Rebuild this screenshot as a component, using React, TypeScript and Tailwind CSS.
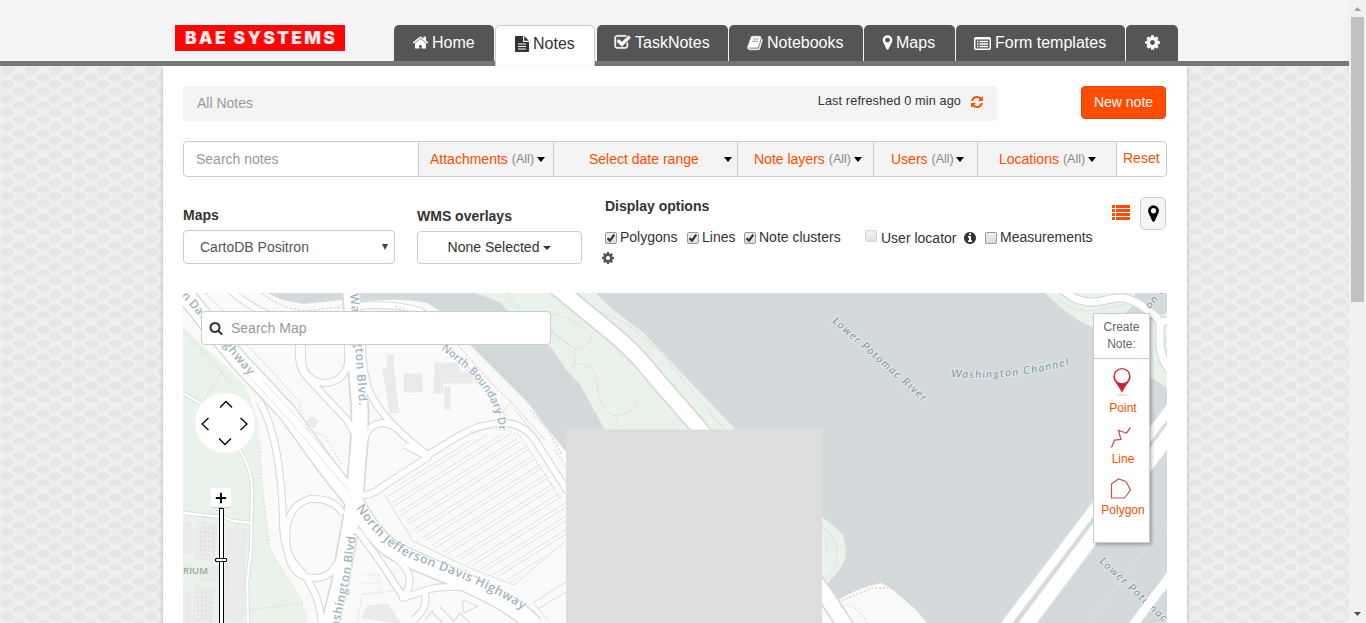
import React from "react";

const SANS = "font-['Liberation_Sans',Arial,sans-serif]";

const ICONS = {
  home: "M1472 992v480q0 26-19 45t-45 19h-384v-384h-256v384h-384q-26 0-45-19t-19-45v-480q0-1 .5-3t.5-3l575-474 575 474q1 2 1 6zm223-69l-62 74q-8 9-21 11h-3q-13 0-21-7l-692-577-692 577q-12 8-24 7-13-2-21-11l-62-74q-8-10-7-23.5t11-21.5l719-599q32-26 76-26t76 26l244 204v-195q0-14 9-23t23-9h192q14 0 23 9t9 23v408l219 182q10 8 11 21.5t-7 23.5z",
  cog: "M1152 896q0-106-75-181t-181-75-181 75-75 181 75 181 181 75 181-75 75-181zm512-109v222q0 12-8 23t-20 13l-185 28q-19 54-39 91 35 50 107 138 10 12 10 25t-9 23q-27 37-99 108t-94 71q-12 0-26-9l-138-108q-44 23-91 38-16 136-29 186-7 28-36 28h-222q-14 0-24.5-8.5t-11.5-21.5l-28-184q-49-16-90-37l-141 107q-10 9-25 9-14 0-25-11-126-114-165-168-7-10-7-23 0-12 8-23 15-21 51-66.5t54-70.5q-27-50-41-99l-183-27q-13-2-21-12.5t-8-23.5v-222q0-12 8-23t19-13l186-28q14-46 39-92-40-57-107-138-10-12-10-24 0-10 9-23 26-36 98.5-107.5t94.5-71.5q13 0 26 10l138 107q44-23 91-38 16-136 29-186 7-28 36-28h222q14 0 24.5 8.5t11.5 21.5l28 184q49 16 90 37l142-107q9-9 24-9 13 0 25 10 129 119 165 170 7 8 7 22 0 12-8 23-15 21-51 66.5t-54 70.5q26 50 41 98l183 28q13 2 21 12.5t8 23.5z",
  marker: "M1152 640q0-106-75-181t-181-75-181 75-75 181 75 181 181 75 181-75 75-181zm256 0q0 109-33 179l-364 774q-16 33-47.5 52t-67.5 19-67.5-19-46.5-52l-365-774q-33-70-33-179 0-212 150-362t362-150 362 150 150 362z",
  refresh: "M1639 1056q0 5-1 7-64 268-268 434.5t-478 166.5q-146 0-282.5-55t-243.5-157l-129 129q-19 19-45 19t-45-19-19-45v-448q0-26 19-45t45-19h448q26 0 45 19t19 45-19 45l-137 137q71 66 161 102t187 36q134 0 250-65t186-179q11-17 53-117 8-23 30-23h192q13 0 22.5 9.5t9.5 22.5zm25-800v448q0 26-19 45t-45 19h-448q-26 0-45-19t-19-45 19-45l138-138q-148-137-349-137-134 0-250 65t-186 179q-11 17-53 117-8 23-30 23h-199q-13 0-22.5-9.5t-9.5-22.5v-7q65-268 270-434.5t480-166.5q146 0 284 55.5t245 156.5l130-129q19-19 45-19t45 19 19 45z",
  file: "M1596 476q14 14 28 36h-472v-472q22 14 36 28zm-476 164h544v1056q0 40-28 68t-68 28h-1344q-40 0-68-28t-28-68v-1600q0-40 28-68t68-28h800v544q0 40 28 68t68 28zm160 736v-64q0-14-9-23t-23-9h-704q-14 0-23 9t-9 23v64q0 14 9 23t23 9h704q14 0 23-9t9-23zm0-256v-64q0-14-9-23t-23-9h-704q-14 0-23 9t-9 23v64q0 14 9 23t23 9h704q14 0 23-9t9-23zm0-256v-64q0-14-9-23t-23-9h-704q-14 0-23 9t-9 23v64q0 14 9 23t23 9h704q14 0 23-9t9-23z",
  check: "M1472 930v318q0 119-84.5 203.5t-203.5 84.5h-832q-119 0-203.5-84.5t-84.5-203.5v-832q0-119 84.5-203.5t203.5-84.5h832q63 0 117 25 15 7 18 23 3 17-9 29l-49 49q-10 10-23 10-3 0-9-2-23-6-45-6h-832q-66 0-113 47t-47 113v832q0 66 47 113t113 47h832q66 0 113-47t47-113v-254q0-13 9-22l64-64q10-10 23-10 6 0 12 3 20 8 20 29zm231-489l-814 814q-24 24-57 24t-57-24l-430-430q-24-24-24-57t24-57l110-110q24-24 57-24t57 24l263 263 647-647q24-24 57-24t57 24l110 110q24 24 24 57t-24 57z",
  book: "M1703 478q40 57 18 129l-275 906q-19 64-76.5 107.5t-122.5 43.5h-923q-77 0-148.5-53.5t-99.5-131.5q-24-67-2-127 0-4 3-27t4-37q1-8-3-21.5t-3-19.5q2-11 8-21t16.5-23.5 16.5-23.5q23-38 45-91.5t30-91.5q3-10 .5-30t-.5-28q3-11 17-28t17-23q21-36 42-92t25-90q1-9-2.5-32t.5-28q4-13 22-30.5t22-22.5q19-26 42.5-84.5t27.5-96.5q1-8-3-25.5t-2-26.5q2-8 9-18t18-23 17-21q8-12 16.5-30.5t15-35 16-36 19.5-32 26.5-23.5 36-11.5 47.5 5.500l-1 3q38-9 51-9h761q74 0 114 56t18 130l-274 906q-36 119-71.5 153.5t-128.5 34.500h-869q-27 0-38 15-11 16-1 43 24 70 144 70h923q29 0 56-15.500t35-41.500l300-987q7-22 5-57 38 15 59 43zm-1064 2q-4 13 2 22.500t20 9.500h608q13 0 25.500-9.500t16.500-22.500l21-64q4-13-2-22.500t-20-9.500h-608q-13 0-25.500 9.500t-16.500 22.500zm-83 256q-4 13 2 22.500t20 9.500h608q13 0 25.500-9.500t16.500-22.500l21-64q4-13-2-22.500t-20-9.500h-608q-13 0-25.500 9.500t-16.500 22.500z",
  info: "M1152 1376v-160q0-14-9-23t-23-9h-96v-512q0-14-9-23t-23-9h-320q-14 0-23 9t-9 23v160q0 14 9 23t23 9h96v320h-96q-14 0-23 9t-9 23v160q0 14 9 23t23 9h448q14 0 23-9t9-23zm-128-896v-160q0-14-9-23t-23-9h-192q-14 0-23 9t-9 23v160q0 14 9 23t23 9h192q14 0 23-9t9-23zm640 416q0 209-103 385.5t-279.5 279.5-385.5 103-385.5-103-279.5-279.5-103-385.5 103-385.5 279.5-279.5 385.5-103 385.5 103 279.5 279.5 103 385.5z",
  search: "M1216 832q0-185-131.5-316.5t-316.5-131.5-316.5 131.5-131.5 316.5 131.5 316.5 316.5 131.5 316.5-131.5 131.5-316.5zm512 832q0 52-38 90t-90 38q-54 0-90-38l-343-342q-179 124-399 124-143 0-273.5-55.5t-225-150-150-225-55.5-273.5 55.5-273.5 150-225 225-150 273.5-55.5 273.5 55.5 225 150 150 225 55.5 273.5q0 220-124 399l343 343q37 37 37 90z",
};

function Icon({ name, heavy = false, className = "" }: { name: keyof typeof ICONS; heavy?: boolean; className?: string }) {
  return (
    <svg viewBox="0 0 1792 1792" className={`shrink-0 ${className}`} fill="currentColor" stroke={heavy ? "currentColor" : "none"} strokeWidth="50">
      <path d={ICONS[name]} />
    </svg>
  );
}

function ListAlt() {
  return (
    <svg viewBox="0 0 17 14" className="h-[14px] w-[17px] shrink-0" fill="none">
      <rect x="0.75" y="1.75" width="15.5" height="11.5" rx="1.2" stroke="#fff" strokeWidth="1.5" />
      <path d="M1 2.500h15" stroke="#fff" strokeWidth="2" />
      <path d="M3 5.500h1.500M5.500 5.500H14M3 8h1.500M5.500 8H14M3 10.500h1.500M5.500 10.500H14" stroke="#fff" strokeWidth="1.300" />
    </svg>
  );
}

function Texture() {
  const dots: React.ReactElement[] = [];
  const lens = (cx: number, cy: number, seed: number) => {
    for (let y = -4; y <= 4; y++)
      for (let x = -7; x <= 7; x++) {
        const r = (x * x) / 46 + (y * y) / 17;
        if (r > 1) continue;
        const n = (Math.abs(x * 7 + y * 13 + seed * 5) * 31) % 5;
        const odd = Math.abs(x + y) % 2 === 1;
        const fill = odd ? (n < 2 ? "#e9e9e9" : "#eeeeee") : ["#dcdcdc", "#e0e0e0", "#e3e3e3", "#dfdfdf", "#e5e5e5"][n];
        dots.push(<rect key={`${cx},${cy},${x},${y}`} x={cx + x} y={cy + y} width="1" height="1" fill={fill} />);
      }
  };
  [0, 1, 2].forEach((c) =>
    [0, 1, 2].forEach((r) => {
      lens(7 + c * 24, 4 + r * 14, c + r * 2);
      lens(19 + c * 24, 11 + r * 14, c * 3 + r + 1);
    }),
  );
  return (
    <svg className="absolute inset-0 h-full w-full" shapeRendering="crispEdges">
      <defs>
        <pattern id="lens" width="72" height="42" patternUnits="userSpaceOnUse">
          <rect width="72" height="42" fill="#eeeeee" />
          {dots}
        </pattern>
      </defs>
      <rect width="100%" height="100%" fill="url(#lens)" />
    </svg>
  );
}

function Tab({ w, pl, children }: { w: string; pl: string; children: React.ReactNode }) {
  return (
    <div className={`flex h-9 items-center rounded-t-[5px] bg-[#555] pb-px text-base whitespace-nowrap text-white ${w} ${pl}`}>
      {children}
    </div>
  );
}

function Caret({ className = "" }: { className?: string }) {
  return <span className={`inline-block border-x-4 border-t-[5px] border-x-transparent border-t-black ${className}`} />;
}

function Filter({ label, all = true, className, caret }: { label: string; all?: boolean; className: string; caret: string }) {
  return (
    <div className={`flex items-center border-l border-[#ccc] bg-[#f4f4f4] text-sm whitespace-nowrap text-[#ff4c00] ${className}`}>
      {label}
      {all && <span className="ml-1 pt-px text-[12.5px] text-[#888]">(All)</span>}
      <Caret className={`mt-px ${caret}`} />
    </div>
  );
}

function Check({ on = false, faded = false, className = "" }: { on?: boolean; faded?: boolean; className?: string }) {
  return (
    <span
      className={`flex size-3 shrink-0 items-center justify-center rounded-[2px] border bg-linear-to-b from-[#efefef] to-[#dcdcdc] ${faded ? "border-[#ccc] opacity-80" : "border-[#999]"} ${className}`}
    >
      {on && (
        <svg viewBox="0 0 10 10" className="size-[10px]" fill="none" stroke="#333" strokeWidth="2.2">
          <path d="M1.5 5.2 4 7.6 8.3 1.6" />
        </svg>
      )}
    </span>
  );
}

const HIGHWAY = "M176 282 L207 322 L240 362 L287 412 L323 462 L353 500 C366 522 376 538 390 548 C412 562 440 570 465 582 C495 596 515 606 534 625";
const BLVD = "M351 290 L355 345 L360 410 Q360 440 358 455 L355 495 L350 527 L340 583 L329 628";
const PARKWAY = "M556 287 L612 333 Q635 352 653 375 L700 429 L824 593 L848 630";
const RAMPS = [
  "M299 340 V358 Q300 370 307 377 L347 420 L356 436",
  "M348 340 V364 Q343 383 323 383 Q304 380 302 362 V345",
  "M362 340 Q362 385 377 405 Q392 428 428 455",
  "M364 442 Q367 424 383 423 Q391 424 396 428",
  "M428 455 L457 437 Q482 422 507 423 Q524 425 535 440 L568 492",
  "M362 495 Q373 495 382 487 L428 457 L405 445",
  "M343 514 Q335 498 310 499 Q287 505 286 536 Q287 578 313 578 Q332 578 337 562",
  "M260 402 Q272 425 277 455 Q282 485 283 517 Q282 550 297 567 C310 580 321 598 322 628",
  "M357 530 L377 557 L404 598",
  "M380 548 Q403 560 409 575 Q412 586 403 598 L427 590 Q440 586 460 587",
  "M425 592 Q427 604 422 611 L414 620",
  "M230 290 Q260 316 290 320",
  "M359 306 Q395 303 420 311 L446 330",
];
const THIN_ROADS = [
  "M183 513 L223 517 L233 521 L251 523",
  "M240 450 Q252 470 252 490 L251 550 L247 583 L248 623",
  "M183 393 L205 406 L235 436 L240 452",
  "M443 345 L467 368 L490 395 Q502 410 504 420",
];
const TRAILS = [
  "M207 293 Q220 310 235 320 M247 345 L275 375 L298 400 L308 430 L325 436 L342 465",
  "M183 330 L222 372 L230 384 M222 372 L205 398",
  "M260 440 L262 483 L270 550 L303 603 L248 610",
  "M508 293 Q514 308 530 315 L570 345",
  "M550 313 Q578 320 590 333 Q594 345 575 349 Q560 340 552 331 M575 349 V364 Q590 362 596 375 Q600 420 622 415 Q640 410 634 396 M576 364 L568 370 M615 415 L618 429",
  "M578 293 Q600 315 615 318 Q640 330 662 354 Q700 400 724 429",
  "M822 526 Q840 540 837 560 Q833 575 823 580 M822 535 Q832 547 822 555",
  "M840 607 Q852 603 859 612 L868 623",
  "M1060 301 Q1080 315 1100 309 L1128 304",
  "M1160 318 L1167 313 M1165 335 L1167 352",
  "M470 432 Q500 424 520 436 L560 498",
  "M368 430 V400",
  "M187 518 V530 M204 517 V522 M237 523 V530 M186 565 L198 575",
];
const RED_TRAILS = [
  "M262 293 Q280 308 305 311 L342 307 M395 307 L430 315",
  "M458 345 Q480 370 495 387 L511 402 M530 410 L548 430 L562 455",
  "M838 602 L872 588 L888 588",
  "M555 450 L567 468",
];

function Buildings() {
  return (
    <g fill="#ebebeb" stroke="#e2e2e2" strokeWidth="0.6">
      <path d="M388 355h6l-1 11h-6zM383 369l10-2 3 20-10 1zM386 389l9-1 4 24-9 1zM404 374h18v18h-18zM435 363h22l3 9 12 2v9h-29v10h-9v-16h1zM445 387h5v22h-5zM311 416l7 5-4 7-8-5z" />
      <path d="M183 524h8v29h-8zM198 522l19 3-3 35-18-1zM228 528l18 1-4 91-17-1zM195 586l19 3-3 40-18-1zM183 592h7v31h-7zM200 568h28v12h-28z" />
      <path d="M362 618l6-12 20-2 12 19z" />
      <path d="M364 576l15-2 2 17-19 3-5 30M362 584l18-1M361 595l34-4" fill="none" />
      <path d="M462 600l16 6-14 7zM432 612l10 10M440 607l14 14 6-8 10 10M425 620l8-10" fill="none" stroke="#ddd" strokeWidth="1.2" />
      <g fill="none" stroke="#d4d4d4" strokeWidth="1.2" strokeDasharray="1.5 3">
        <path d="M201 527v28M205 527v29M209 527v29M213 528v26M198 592v31M202 591v32M206 592v31M210 593v30" />
      </g>
    </g>
  );
}

function MapCanvas() {
  const rows = Array.from({ length: 20 }, (_, i) => i);
  return (
    <svg viewBox="183 293 984 330" className="block h-[330px] w-[984px] font-['Open_Sans','Noto_Sans',sans-serif]">
      <defs>
        <clipPath id="lot">
          <path d="M386 494 L428 464 L460 444 L490 434 L512 434 L530 450 L566 502 V540 L512 582 L470 565 L413 538 Z" />
        </clipPath>
        <path id="hwyLabel" d="M356 508 C373 533 388 549 412 559 C445 573 485 583 540 621" />
        <path id="blvdLabel" d="M336 640 L351 570 L359 510" />
        <path id="blvdTop" d="M350 294 L355 345 L361 430" />
        <path id="northLabel" d="M441 349 L467 370 Q498 400 499 432" />
        <path id="ghway" d="M223 345 L262 391" />
        <path id="riverLabel" d="M832 322 L927 405" />
        <path id="channelLabel" d="M951 377 Q1012 382 1080 362" />
        <path id="river2" d="M1099 562 L1176 634" />
      </defs>
      <rect x="183" y="293" width="984" height="330" fill="#fafaf8" />
      <path d="M183 328 L227 367 L245 385 L258 420 L262 483 L270 550 L303 603 L308 623 H183Z" fill="#e9f2eb" />
      <path d="M268 293 L280 299 L303 304 L342 300 V293Z M359 293 V302 Q400 297 427 303 L443 313 L470 345 L527 402 L550 432 L567 453 H822 V597 L836 601 Q860 587 881 583 L893 590 L915 609 L927 623 H1167 V293Z" fill="#d4dadc" />
      <path d="M475 293 L500 302 L510 314 L547 343 L553 350 L565 368 L580 385 L605 430 H736 L677 368 L643 332 L613 310 L596 293Z" fill="#e9f2eb" />
      <path d="M822 517 L836 528 L843 535 L846 550 L845 560 Q838 574 830 580 L826 588 H822Z" fill="#e9f2eb" />
      <path d="M1045 293 L1060 307 Q1080 323 1093 327 L1115 322 L1128 311 L1135 303 V293Z M1143 327 L1158 315 L1167 313 V388 L1150 377Z" fill="#e9f2eb" />

      <g fill="none" stroke="#dedede">
        <g clipPath="url(#lot)" strokeWidth="0.9">
          {rows.map((i) => (
            <path key={i} d={`M${374 + i * 8.2} ${487 + i * 8.4} l190 -118 m1.8 3.4 l-190 118`} />
          ))}
        </g>
        <path d="M384 494 L413 541 L470 568 L514 585 L570 537" strokeWidth="1" />
        <path d="M533 603 L566 582 M538 609 L566 592 M533 603 L548 620" strokeWidth="1" />
        <path d="M502 413 L511 402 L545 440 M513 408 L540 440" strokeWidth="1" />
      </g>
      <Buildings />

      <g fill="none" strokeLinejoin="round">
        <g stroke="#dadada">
          {THIN_ROADS.map((d) => <path key={d} d={d} strokeWidth="4" />)}
          {RAMPS.map((d) => <path key={d} d={d} strokeWidth="8" />)}
          <path d={HIGHWAY} strokeWidth="20" />
          <path d={BLVD} strokeWidth="19" />
          <path d={PARKWAY} strokeWidth="18" />
        </g>
        <g stroke="#ffffff">
          {THIN_ROADS.map((d) => <path key={d} d={d} strokeWidth="2.4" />)}
          {RAMPS.map((d) => <path key={d} d={d} strokeWidth="5.8" />)}
          <path d={HIGHWAY} strokeWidth="17" />
          <path d={BLVD} strokeWidth="15.5" />
          <path d={PARKWAY} strokeWidth="14.5" />
        </g>
        <path d="M246 373 L287 418 L348 490 M262 380 L297 417 L346 476" stroke="#e4e4e4" strokeWidth="1" />
        <g stroke="#d9dcdc">
          <path d="M999 633 L1174 403" strokeWidth="13" />
          <path d="M1020 633 L1174 428" strokeWidth="18" />
          <path d="M1127 633 L1174 571" strokeWidth="11" />
        </g>
        <g stroke="#ffffff">
          <path d="M999 633 L1174 403" strokeWidth="9" />
          <path d="M1020 633 L1174 428" strokeWidth="14.5" />
        </g>
        <path d="M1088 623 L1167 521" stroke="#e1e5e6" strokeWidth="0.8" />
        <path d="M1063 290 Q1074 301 1090 302 C1104 303 1112 296 1124 298 C1138 301 1148 310 1162 322 L1170 320 M1160 322 V345 Q1161 360 1170 370" stroke="#d6dada" strokeWidth="9.5" />
        <path d="M1063 290 Q1074 301 1090 302 C1104 303 1112 296 1124 298 C1138 301 1148 310 1162 322 L1170 320 M1160 322 V345 Q1161 360 1170 370" stroke="#ffffff" strokeWidth="7" />
        <g stroke="#d8dada" strokeWidth="1.3" strokeDasharray="1.5 2.2">
          {TRAILS.map((d) => <path key={d} d={d} />)}
        </g>
        <g stroke="#f0c9cb" strokeWidth="1.3" strokeDasharray="2 2">
          {RED_TRAILS.map((d) => <path key={d} d={d} />)}
        </g>
      </g>

      <rect x="566" y="429.5" width="256" height="194" fill="#dddddd" />

      <g fill="#a3b3bf" stroke="#ffffff" strokeWidth="1.6" paintOrder="stroke" fontSize="12.500" fontWeight="600">
        <text letterSpacing="0.52"><textPath href="#hwyLabel">North Jefferson Davis Highway</textPath></text>
        <text fontSize="12" letterSpacing="0.55"><textPath href="#blvdLabel">Washington Blvd.</textPath></text>
        <text fontSize="12" letterSpacing="0.75"><textPath href="#blvdTop">Washington Blvd.</textPath></text>
        <text fontSize="11" letterSpacing="0.1"><textPath href="#northLabel">North Boundary Dr.</textPath></text>
        <text fontSize="12" letterSpacing="0.7"><textPath href="#ghway">ghway</textPath></text>
        <text fontSize="12" transform="translate(181 296) rotate(48)">n Davis</text>
      </g>
      <text x="183" y="574" fontSize="9.5" fontWeight="600" fill="#94aa9a" textLength="25">RIUM</text>
      <g fill="#7896a5" stroke="#e6ebed" strokeWidth="1.8" paintOrder="stroke" fontSize="11" fontStyle="italic" className="font-['Lato','Open_Sans',sans-serif]">
        <text letterSpacing="1.38"><textPath href="#riverLabel">Lower Potomac River</textPath></text>
        <text letterSpacing="1.42"><textPath href="#channelLabel">Washington Channel</textPath></text>
        <text letterSpacing="1.5"><textPath href="#river2">Lower Potomac</textPath></text>
        <text transform="translate(1150 309) rotate(-50)" letterSpacing="1.3">on Channel</text>
      </g>
      <path d="M1127 633 L1174 571" stroke="#ffffff" strokeWidth="9" />
    </svg>
  );
}

function CreateItem({ label, className, children }: { label: string; className: string; children: React.ReactNode }) {
  return (
    <div className={`flex flex-col items-center text-[12px] leading-[14px] text-[#ff4c00] ${className}`}>
      {children}
      <span className="ml-[3px]">{label}</span>
    </div>
  );
}

export default function App() {
  return (
    <div className={`relative flex h-[623px] w-[1366px] overflow-hidden text-[#333] ${SANS}`}>
      <div className="relative flex w-[1349px] flex-col">
        <header className="flex h-[66px] shrink-0 items-start bg-[linear-gradient(#f4f4f4_61px,#777_61px)] pt-[25px] pl-[175px]">
          <div className="mr-[49px] flex h-[26px] w-[170px] items-center justify-center bg-[#ff0505] pl-[2px] font-['Inter','Liberation_Sans',sans-serif] text-[17.5px] font-black tracking-[2.2px] whitespace-nowrap text-[#fde8e8]">
            BAE SYSTEMS
          </div>
          <nav className="flex items-start gap-px">
            <Tab w="w-[100px]" pl="pl-[18px]"><Icon name="home" className="mr-[3px] size-[17px]" />Home</Tab>
            <div className="mr-px flex h-[41px] w-[100px] items-center rounded-t-[5px] border border-b-0 border-[#ccc] bg-white pb-1 pl-[19px] text-base whitespace-nowrap text-[#333]">
              <svg viewBox="0 0 14 16" className="mr-1 mb-px h-4 w-[14px] shrink-0" fill="currentColor">
                <path fillRule="evenodd" d="M0 .8Q0 0 .8 0H8v5.200Q8 6 8.800 6H14v9.200q0 .8-.8.8H.8Q0 16 0 15.200zM3 7.500h8v1.100H3zM3 10h8v1.100H3zM3 12.500h8v1.100H3zM9.200 .2Q9.600.4 10 .8L13.200 4q.4.4.5.8H9.200z" />
              </svg>
              Notes
            </div>
            <Tab w="w-[131px]" pl="pl-[17px]"><Icon name="check" heavy className="mr-[4px] size-[17px]" />TaskNotes</Tab>
            <Tab w="w-[134px]" pl="pl-[18px]"><Icon name="book" heavy className="mr-[4px] size-[16px]" />Notebooks</Tab>
            <Tab w="w-[91px]" pl="pl-[15px]"><Icon name="marker" className="size-[17px]" />Maps</Tab>
            <Tab w="w-[169px]" pl="pl-[18px]"><span className="mr-1"><ListAlt /></span>Form templates</Tab>
            <Tab w="w-[52px]" pl="pl-[18px]"><Icon name="cog" className="size-[17px]" /></Tab>
          </nav>
        </header>

        <div className="relative flex grow">
          <Texture />
          <main className="relative ml-[163px] flex w-[1024px] flex-col bg-white px-5 pt-5 shadow-[0_2px_4px_rgba(0,0,0,0.25)]">
            <div className="flex items-start justify-between pr-px">
              <div className="flex h-[35px] w-[814px] items-center justify-between rounded-[3px] bg-[#f4f4f4] pr-[13px] pl-[14px]">
                <span className="pb-0.5 text-sm text-[#999]">All Notes</span>
                <span className="flex items-center pb-[3px] text-[12.7px] tracking-[0.12px]">
                  Last refreshed 0 min ago
                  <Icon name="refresh" className="ml-[9px] size-[14px] text-[#ff4c00]" />
                </span>
              </div>
              <button className="h-[33px] w-[85px] rounded-[4px] border border-[#e64500] bg-[#ff4c00] pb-0.5 text-sm whitespace-nowrap text-white">New note</button>
            </div>

            <div className="mt-5 flex h-9 shrink-0 overflow-hidden rounded-[4px] border border-[#ccc]">
              <div className="flex w-[234px] items-center pl-[12px] text-sm text-[#999]">Search notes</div>
              <Filter label="Attachments" className="w-[135px] pl-[11px]" caret="ml-[3px]" />
              <Filter label="Select date range" all={false} className="w-[184px] pl-[35px]" caret="ml-auto mr-[5px]" />
              <Filter label="Note layers" className="w-[136px] pl-[16px]" caret="ml-[3px]" />
              <Filter label="Users" className="w-[104px] pl-[17px]" caret="ml-[2px]" />
              <Filter label="Locations" className="w-[139px] pl-[21px]" caret="ml-[3px]" />
              <div className="flex grow items-center border-l border-[#ccc] pb-[2px] pl-[6px] text-sm text-[#ff4c00]">Reset</div>
            </div>

            <div className="flex h-[116px] shrink-0 items-start pt-5 text-sm">
              <div className="w-[212px] pt-2">
                <div className="leading-5 font-bold">Maps</div>
                <div className="mt-[5px] flex h-[34px] items-center justify-between rounded-[4px] border border-[#ccc] pr-[6px] pl-[16px] text-[#555]">
                  CartoDB Positron
                  <svg viewBox="0 0 6 6" className="size-[6px]"><path d="M0 0h6L3 6z" fill="#444" /></svg>
                </div>
              </div>
              <div className="ml-[22px] w-[165px] pt-[9px]">
                <div className="leading-5 font-bold">WMS overlays</div>
                <div className="mt-[5px] flex h-[33px] items-center justify-center rounded-[4px] border border-[#ccc] pb-0.5">
                  None Selected
                  <Caret className="mt-0.5 ml-1 border-t-4! border-t-[#333]!" />
                </div>
              </div>
              <div className="ml-5 w-[500px]">
                <div className="ml-[3px] leading-[18px] font-bold">Display options</div>
                <div className="mt-[12px] ml-[3px] flex h-5 items-center whitespace-nowrap">
                  <Check on className="mt-0.5 mr-[3px]" />
                  <span className="w-[67px]">Polygons</span>
                  <Check on className="mt-0.5 mr-[3px]" />
                  <span className="w-[42px]">Lines</span>
                  <Check on className="mt-0.5 mr-[3px]" />
                  <span className="w-[106px]">Note clusters</span>
                  <Check faded className="mr-1 mb-0.5" />
                  <span className="w-[82px] pt-0.5">User locator</span>
                  <Icon name="info" className="mt-0.5 mr-[8px] size-[14px]" />
                  <Check className="mt-0.5 mr-[3px]" />
                  <span>Measurements</span>
                </div>
                <Icon name="cog" className="mt-1 -ml-px size-[14px] text-[#555]" />
              </div>
              <div className="ml-auto flex items-start pr-px">
                <svg viewBox="0 0 18 15" className="mt-2 mr-[10px] h-[15px] w-[18px]" fill="#ff4c00" shapeRendering="crispEdges">
                  {[0, 4, 8, 12].map((y) => (
                    <path key={y} d={`M0 ${y}h3v3h-3zM4 ${y}h14v3h-14z`} />
                  ))}
                </svg>
                <div className="flex h-[33px] w-[26px] items-center justify-center rounded-[5px] border border-[#ccc] bg-[#f5f5f5] text-black">
                  <Icon name="marker" className="size-[19px]" />
                </div>
              </div>
            </div>

            <section className="relative h-[330px] w-[984px] overflow-hidden">
              <MapCanvas />
              <div className="absolute top-[18px] left-[18px] flex h-[34px] w-[350px] items-center rounded-[4px] border border-[#ccc] bg-white pl-[7px] text-sm text-[#999]">
                <Icon name="search" className="mr-[8px] size-[14px] text-[#333]" />
                Search Map
              </div>
              <svg viewBox="0 0 60 60" className="absolute top-[100px] left-[12px] size-[60px]" fill="none" stroke="#000" strokeWidth="1.3">
                <circle cx="30" cy="30" r="30" fill="#fff" stroke="none" />
                <path d="M25 14.5 31 8.5 37 14.5M24 45.5 30 51.5 36 45.5M13.5 25 7 31 13.5 37M45.5 25 52 31 45.5 37" />
              </svg>
              <div className="absolute top-[195px] left-[28px] flex h-[135px] w-5 flex-col items-center">
                <svg viewBox="0 0 20 20" className="size-5 shrink-0 rounded-[2px] border-b border-[#ccc] bg-white">
                  <path d="M4.5 10.5h11M10 5v11" stroke="#000" strokeWidth="2" />
                </svg>
                <div className="w-[5px] grow border border-b-0 border-black bg-white" />
              </div>
              <div className="absolute top-[265px] left-[32px] h-1 w-3 rounded-[1px] border border-black bg-white" />

              <div className="absolute top-5 left-[910px] flex h-[230px] w-[57px] flex-col border border-[#ccc] bg-white shadow-[2px_2px_3px_rgba(0,0,0,0.25)]">
                <div className="flex h-[45px] shrink-0 items-center justify-center border-b border-[#ccc] pb-px text-center text-[12px] leading-[17px] text-[#666]">
                  Create<br />Note:
                </div>
                <CreateItem label="Point" className="mt-[8px]">
                  <svg viewBox="0 0 20 30" className="mb-[4px] h-[30px] w-5">
                    <ellipse cx="10" cy="28" rx="6" ry="1" fill="#e4e4e4" />
                    <path d="M10 1a8.600 8.600 0 0 1 8.600 8.600c0 5-5.500 9-8.600 16.400C6.900 18.600 1.400 14.600 1.400 9.600A8.600 8.600 0 0 1 10 1z" fill="#d2232a" />
                    <circle cx="10" cy="9.300" r="7" fill="#fff" />
                  </svg>
                </CreateItem>
                <CreateItem label="Line" className="mt-[11px]">
                  <svg viewBox="0 0 22 22" className="mr-0.5 mb-[4px] size-[22px]" fill="none" stroke="#d2504f" strokeWidth="1.3">
                    <path d="M1.500 21.500 4.500 14 11 13.500 8.500 4.500 16.500 7 20.500 1.500" />
                  </svg>
                </CreateItem>
                <CreateItem label="Polygon" className="mt-[11px]">
                  <svg viewBox="0 0 22 22" className="mr-0.5 mb-[4px] size-[22px]" fill="none" stroke="#d2504f" strokeWidth="1.2">
                    <path d="M1.500 21V7L8.500 2 16 4.500 20.500 13 14.500 21z" />
                  </svg>
                </CreateItem>
              </div>
            </section>
          </main>
        </div>
      </div>

      <div className="flex w-[17px] flex-col items-center bg-[#f1f1f1]">
        <svg viewBox="0 0 17 17" className="size-[17px] shrink-0"><path d="M5 11 8.500 7 12 11z" fill="#a3a3a3" /></svg>
        <div className="h-[285px] w-[13px] bg-[#c1c1c1]" />
        <svg viewBox="0 0 17 17" className="mt-auto size-[17px] shrink-0"><path d="M5 6h7L8.500 10z" fill="#505050" /></svg>
      </div>
    </div>
  );
}
